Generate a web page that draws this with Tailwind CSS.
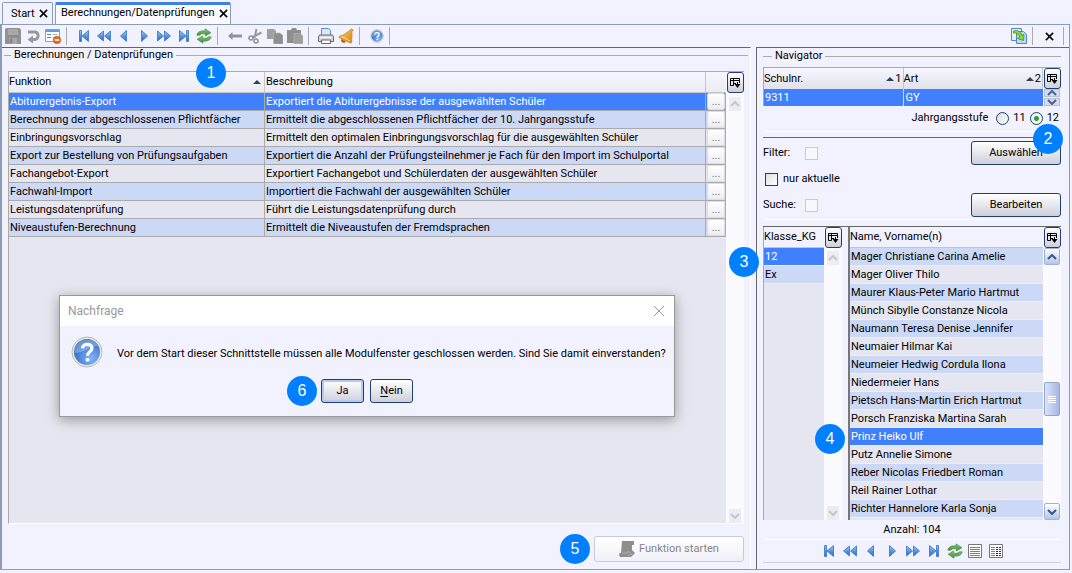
<!DOCTYPE html>
<html lang="de">
<head>
<meta charset="utf-8">
<meta name="viewport" content="width=device-width, initial-scale=1">
<title>Berechnungen/Datenprüfungen</title>
<script src="https://cdn.jsdelivr.net/npm/@tailwindcss/browser@4"></script>
</head>
<body class="flex min-h-screen flex-col bg-[#f2f2ff] font-['Roboto','Noto_Sans',sans-serif] text-[11px] leading-4 text-black">

<svg class="absolute size-0" aria-hidden="true">
  <defs>
    <linearGradient id="blue" x1="0" y1="0" x2="0" y2="1"><stop offset="0" stop-color="#9cc8f5"/><stop offset="1" stop-color="#2463c4"/></linearGradient>
    <linearGradient id="green" x1="0" y1="0" x2="0" y2="1"><stop offset="0" stop-color="#83c878"/><stop offset="1" stop-color="#3d8c3a"/></linearGradient>
    <linearGradient id="gold" x1="0" y1="0" x2="1" y2="1"><stop offset="0" stop-color="#ffd667"/><stop offset="1" stop-color="#d07c10"/></linearGradient>
    <radialGradient id="ball" cx=".65" cy=".75" r=".8"><stop offset="0" stop-color="#80b5fb"/><stop offset="1" stop-color="#2563bd"/></radialGradient>
    <symbol id="first" viewBox="0 0 16 16"><path d="M3.500 2.500h2v11h-2zM12.500 2.500v11L6 8z" fill="url(#blue)" stroke="#4a83d0"/></symbol>
    <symbol id="last" viewBox="0 0 16 16"><path d="M10.500 2.500h2v11h-2zM3.500 2.500v11L10 8z" fill="url(#blue)" stroke="#4a83d0"/></symbol>
    <symbol id="rew" viewBox="0 0 16 16"><path d="M7.500 3v10L1.500 8zM14.500 3v10L8.500 8z" fill="url(#blue)" stroke="#4a83d0"/></symbol>
    <symbol id="fwd" viewBox="0 0 16 16"><path d="M1.500 3v10l6-5zM8.500 3v10l6-5z" fill="url(#blue)" stroke="#4a83d0"/></symbol>
    <symbol id="prev" viewBox="0 0 16 16"><path d="M10.500 2.500v11L4.500 8z" fill="url(#blue)" stroke="#4a83d0"/></symbol>
    <symbol id="next" viewBox="0 0 16 16"><path d="M5.500 2.500v11l6-5.500z" fill="url(#blue)" stroke="#4a83d0"/></symbol>
    <symbol id="refresh" viewBox="0 0 16 16"><g fill="url(#green)" stroke="#44883f" stroke-width=".6"><path d="M.8 7.200C1.200 4 4.500 2.300 9 3V.8l6 3.900-5.600 3.400V6C6.500 5.300 4.500 6 3.800 7.200z"/><path d="M15.200 8.800c-.4 3.200-3.700 4.900-8.200 4.200v2.200l-6-3.900 5.600-3.400V10c2.900.7 4.900 0 5.600-1.200z"/></g></symbol>
    <symbol id="save" viewBox="0 0 16 16"><path d="M0 1.500Q0 0 1.500 0h13L16 1.500V16H0z" fill="#929292"/><path d="M3 1h10v6H3zM4 10h8v6H4z" fill="#a9a9a9"/><path d="M5 11h2v4H5zM3 8h10" fill="#858585" stroke="#858585"/></symbol>
    <symbol id="undo" viewBox="0 0 16 16"><path d="M2 4h7a3.800 3.800 0 0 1 0 7.500H6" fill="none" stroke="#989898" stroke-width="2.800"/><path d="M7 7.500v8L1.500 11.500z" fill="#989898"/></symbol>
    <symbol id="form" viewBox="0 0 16 16"><path d="M.5 1.500h14v12H.5z" fill="#fff" stroke="#78a6dc"/><path d="M1 2h13v2H1z" fill="#639be0"/><path d="M2 6.500h4M2 9.500h4" stroke="#5a87c0"/><path d="M7.500 6.500h5M7.500 9.500h3" stroke="#9bb"/><circle cx="12" cy="12" r="3.800" fill="#e66a1d" stroke="#c4490e" stroke-width=".5"/><path d="M9.800 12h4.400" stroke="#fff" stroke-width="1.600"/></symbol>
    <symbol id="back" viewBox="0 0 16 16"><path d="M1 8l4.500-4v2.500H15v3H5.500V12z" fill="#929292"/></symbol>
    <symbol id="cut" viewBox="0 0 16 16"><path d="M9.500 1L7.500 10M14.500 4.500L5 9.500" stroke="#989898" stroke-width="2" fill="none"/><circle cx="4" cy="10" r="2" fill="none" stroke="#929292" stroke-width="1.500"/><circle cx="9" cy="13" r="2" fill="none" stroke="#929292" stroke-width="1.500"/></symbol>
    <symbol id="copy" viewBox="0 0 16 16"><path d="M0 1h7l2 2v8H0z" fill="#a0a0a0"/><path d="M6.500 5H13l3 2.500V16H6.500z" fill="#8e8e8e" stroke="#bbb" stroke-width=".6"/></symbol>
    <symbol id="paste" viewBox="0 0 16 16"><path d="M0 2h4l1-2h4l1 2h4v13H0z" fill="#8f8f8f"/><path d="M7 5.500h6L16 8v8H7z" fill="#9e9e9e" stroke="#bbb" stroke-width=".6"/></symbol>
    <symbol id="print" viewBox="0 0 16 16"><path d="M3.500 8V.5h7l2 2V8z" fill="#d5e9ff" stroke="#568ed0"/><path d="M1.500 7h13l1 2v4.500H.5V9z" fill="#d6d6d6" stroke="#65686d"/><path d="M3.500 12h9v3.500h-9z" fill="#fff" stroke="#62666b"/><path d="M2 9.500h12" stroke="#fff"/></symbol>
    <symbol id="bell" viewBox="0 0 16 16"><path d="M13.800.8l1.500 1.500-1.500 1.500c.7 3-.2 6.200 0 10.400l-1 1L1 9.500l.5-1.500c4.500-.5 6-2.700 9.700-5.200z" fill="url(#gold)" stroke="#c9820c" stroke-width=".7"/><path d="M3.500 11a2.500 2.500 0 0 0 4.500 2.600z" fill="#b96811"/><path d="M4 8.500l8 4.500" stroke="#ffe59b"/></symbol>
    <symbol id="help" viewBox="0 0 32 32"><circle cx="16" cy="16" r="15" fill="#ebe9e6" stroke="#bcb9b4"/><circle cx="16" cy="16" r="13" fill="url(#ball)"/><path d="M3.500 17A12.500 12.500 0 0 1 27 10C19 9 16 16 3.500 17z" fill="#fff" opacity=".28"/><path d="M11.500 12.200c.2-5.200 9.500-5.200 9.500 0 0 3.400-4.500 3.600-4.500 7.600" fill="none" stroke="#fff" stroke-width="3.200"/><circle cx="16.500" cy="23.800" r="2" fill="#fff"/></symbol>
    <symbol id="export" viewBox="0 0 16 16"><path d="M.5.500h10v12H.5z" fill="#e4f0fd" stroke="#4f86c6"/><path d="M5.500 3.500h7l3 3v9h-10z" fill="#bcdaf8" stroke="#4f86c6"/><path d="M2.500 3c4-1.500 7.500.5 8.200 4.200L13 6.500l-.5 6-6-2 2.200-1.300C8 6.300 5.500 4.500 2.500 5z" fill="#8fd636" stroke="#34821f" stroke-width=".7"/></symbol>
    <symbol id="close" viewBox="0 0 10 10"><path d="M1 1l8 8M9 1L1 9" stroke="currentColor" stroke-width="1.700" fill="none"/></symbol>
    <symbol id="thinclose" viewBox="0 0 12 12"><path d="M1 1l10 10M11 1L1 11" stroke="currentColor" fill="none"/></symbol>
    <symbol id="cols" viewBox="0 0 12 12"><path d="M4.500 8.500h-3v-7h9V6M1.500 3.500h9M4.500 1.500v7M4.500 6.500H7" stroke="#000" fill="none"/><path d="M5.500 7h6l-3 4z"/><path d="M8.500 5v3" stroke="#000"/></symbol>
    <symbol id="sort" viewBox="0 0 8 4"><path d="M4 0l4 4H0z" fill="#2c4358"/></symbol>
    <symbol id="up" viewBox="0 0 10 6"><path d="M1 5l4-4 4 4" stroke="currentColor" stroke-width="2" fill="none"/></symbol>
    <symbol id="down" viewBox="0 0 10 6"><path d="M1 1l4 4 4-4" stroke="currentColor" stroke-width="2" fill="none"/></symbol>
    <symbol id="list" viewBox="0 0 14 14"><path d="M.5.500h13v13H.5z" fill="#fff" stroke="#777"/><path d="M2 3.500h10M2 5.500h10M2 7.500h10M2 9.500h10M2 11.500h10" stroke="#478dd0"/></symbol>
    <symbol id="list2" viewBox="0 0 14 14"><path d="M.5.500h13v13H.5z" fill="#fff" stroke="#777"/><path d="M2 3.500h4M2 5.500h4M2 7.500h4M2 9.500h4M2 11.500h4" stroke="#478dd0"/><path d="M7 3.500h5M7 5.500h5M7 7.500h5M7 9.500h5M7 11.500h5" stroke="#333" stroke-dasharray="2 1"/></symbol>
    <symbol id="scroll" viewBox="0 0 16 16"><path d="M3 0h12v4h-2v5l3 3-3 3-1 1H1c-1-1-1-4 0-4h1z" fill="#8e8e8e"/><path d="M3 12h6v-2l4 3-4 2" fill="none" stroke="#aaa"/></symbol>
  </defs>
</svg>

<nav class="flex gap-[2px] pt-[2px] pl-[2px]" aria-label="Module">
  <div class="flex h-[22px] w-[51px] items-center gap-1 rounded-t-[2px] border border-b-0 border-[#8a9cb8] pl-2">
    <button>Start</button><button aria-label="Start schließen"><svg class="size-[9px]"><use href="#close"/></svg></button>
  </div>
  <div class="flex h-[22px] w-[176px] items-start gap-1 rounded-t-[2px] border border-t-[3px] border-b-0 border-[#8a9cb8] border-t-[#3f7fe8] bg-[#fafaff] pl-[5px]">
    <button>Berechnungen/Datenprüfungen</button><button class="pt-1" aria-label="Berechnungen schließen"><svg class="size-[9px]"><use href="#close"/></svg></button>
  </div>
</nav>

<div class="mr-[2px] mb-[3px] flex flex-1 flex-col border border-l-2 border-[#8a9cb8]">
  <div class="flex h-[22px] items-center pr-[5px]">
    <button class="ml-[3px]" aria-label="Speichern"><svg class="size-4"><use href="#save"/></svg></button>
    <button class="ml-[5px]" aria-label="Rückgängig"><svg class="size-4"><use href="#undo"/></svg></button>
    <button class="ml-[3px]" aria-label="Formular"><svg class="size-4"><use href="#form"/></svg></button>
    <span class="mx-[5px] h-[18px] w-px bg-[#aaa]"></span>
    <div class="flex gap-1 pl-1">
      <button aria-label="Erster"><svg class="size-4"><use href="#first"/></svg></button>
      <button aria-label="Schnell zurück"><svg class="size-4"><use href="#rew"/></svg></button>
      <button aria-label="Zurück"><svg class="size-4"><use href="#prev"/></svg></button>
      <button aria-label="Vor"><svg class="size-4"><use href="#next"/></svg></button>
      <button aria-label="Schnell vor"><svg class="size-4"><use href="#fwd"/></svg></button>
      <button aria-label="Letzter"><svg class="size-4"><use href="#last"/></svg></button>
      <button aria-label="Aktualisieren"><svg class="size-4"><use href="#refresh"/></svg></button>
    </div>
    <span class="mx-[5px] h-[18px] w-px bg-[#aaa]"></span>
    <div class="flex gap-1 pl-1">
      <button aria-label="Pfeil zurück"><svg class="size-4"><use href="#back"/></svg></button>
      <button aria-label="Ausschneiden"><svg class="size-4"><use href="#cut"/></svg></button>
      <button aria-label="Kopieren"><svg class="size-4"><use href="#copy"/></svg></button>
      <button aria-label="Einfügen"><svg class="size-4"><use href="#paste"/></svg></button>
    </div>
    <span class="mx-[5px] h-[18px] w-px bg-[#aaa]"></span>
    <div class="flex gap-1 pl-1">
      <button aria-label="Drucken"><svg class="size-4"><use href="#print"/></svg></button>
      <button aria-label="Erinnerung"><svg class="size-4"><use href="#bell"/></svg></button>
    </div>
    <span class="mx-[5px] h-[18px] w-px bg-[#aaa]"></span>
    <button class="ml-[5px]" aria-label="Hilfe"><svg class="size-[14px]"><use href="#help"/></svg></button>
    <span class="mx-[5px] h-[18px] w-px bg-[#aaa]"></span>
    <button class="ml-auto" aria-label="Exportieren"><svg class="size-4"><use href="#export"/></svg></button>
    <span class="mr-3 ml-[5px] h-[18px] w-px bg-[#aaa]"></span>
    <button aria-label="Schließen"><svg class="size-[9px]"><use href="#close"/></svg></button>
    <span class="ml-[9px] h-[18px] w-px bg-[#aaa]"></span>
  </div>

  <div class="flex flex-1 gap-[5px]">
    <!-- Funktionen -->
    <main class="relative flex flex-1 flex-col border-t border-r border-t-[#666] border-r-white pr-[6px] pl-[6px]">
      <div class="-mx-1 flex h-[14px] items-center gap-[3px]">
        <span class="h-px w-[7px] bg-[#aaa]"></span><h1>Berechnungen / Datenprüfungen</h1><span class="h-px flex-1 bg-[#aaa]"></span>
      </div>
      <div class="mt-[9px] flex flex-1 border-t border-b border-l border-[#aaa] border-b-white">
        <div class="flex-1 bg-[#e6e6f0]">
          <table class="w-full table-fixed border-separate border-spacing-0 text-left">
            <colgroup><col class="w-[256px]"><col><col class="w-5"></colgroup>
            <thead class="bg-linear-to-b from-[#f6f6ff] to-[#ebebf4]">
              <tr class="h-[21px]">
                <th class="border-r border-b border-[#c4c4cc] p-0 font-normal"><div class="flex items-center justify-between pr-[3px]">Funktion<svg class="h-1 w-2"><use href="#sort"/></svg></div></th>
                <th class="border-r border-b border-[#c4c4cc] p-0 pl-px font-normal">Beschreibung</th>
                <th class="border-b border-[#c4c4cc] p-0"></th>
              </tr>
            </thead>
            <tbody class="[&_td]:h-[18px] [&_td]:border-r [&_td]:border-b [&_td]:border-[#aaa] [&_td]:p-0 [&_td]:pl-px [&_td]:leading-4 [&_td]:whitespace-nowrap [&_tr:nth-child(even)]:bg-[#ccd9f6] [&_button]:block [&_button]:h-[17px] [&_button]:w-full [&_button]:rounded-[2px] [&_button]:border [&_button]:border-[#dcdce6] [&_button]:bg-linear-to-b [&_button]:from-white [&_button]:to-[#ececf5] [&_button]:leading-4 [&_button]:text-[#777]">
              <tr class="bg-[#4080ff] text-white"><td>Abiturergebnis-Export</td><td>Exportiert die Abiturergebnisse der ausgewählten Schüler</td><td><button>...</button></td></tr>
              <tr><td>Berechnung der abgeschlossenen Pflichtfächer</td><td>Ermittelt die abgeschlossenen Pflichtfächer der 10. Jahrgangsstufe</td><td><button>...</button></td></tr>
              <tr><td>Einbringungsvorschlag</td><td>Ermittelt den optimalen Einbringungsvorschlag für die ausgewählten Schüler</td><td><button>...</button></td></tr>
              <tr><td>Export zur Bestellung von Prüfungsaufgaben</td><td>Exportiert die Anzahl der Prüfungsteilnehmer je Fach für den Import im Schulportal</td><td><button>...</button></td></tr>
              <tr><td>Fachangebot-Export</td><td>Exportiert Fachangebot und Schülerdaten der ausgewählten Schüler</td><td><button>...</button></td></tr>
              <tr><td>Fachwahl-Import</td><td>Importiert die Fachwahl der ausgewählten Schüler</td><td><button>...</button></td></tr>
              <tr><td>Leistungsdatenprüfung</td><td>Führt die Leistungsdatenprüfung durch</td><td><button>...</button></td></tr>
              <tr><td>Niveaustufen-Berechnung</td><td>Ermittelt die Niveaustufen der Fremdsprachen</td><td><button>...</button></td></tr>
            </tbody>
          </table>
        </div>
        <div class="flex w-[18px] flex-col items-center bg-[#fafaff]">
          <button class="flex h-[21px] w-[17px] items-center justify-center rounded-[3px] border border-[#1f3f73] bg-linear-to-b from-white to-[#cfcfdb]" aria-label="Spalten wählen"><svg class="size-3"><use href="#cols"/></svg></button>
          <button class="mt-1 flex h-[14px] w-3 items-center justify-center bg-[#ececf2] text-[#c6c6ca]" aria-label="Nach oben"><svg class="h-[6px] w-[10px]"><use href="#up"/></svg></button>
          <button class="mt-auto flex h-[14px] w-3 items-center justify-center bg-[#ececf2] text-[#c6c6ca]" aria-label="Nach unten"><svg class="h-[6px] w-[10px]"><use href="#down"/></svg></button>
        </div>
      </div>
      <div class="mt-[10px] mb-[5px] flex items-center justify-end gap-1">
        <span class="flex size-[30px] items-center justify-center rounded-full bg-[#0080ff] font-['Liberation_Sans',sans-serif] text-base text-white">5</span>
        <button class="flex h-[26px] w-[150px] items-center justify-center gap-1 rounded-[3px] border border-[#cacad4] bg-linear-to-b from-white to-[#f0f0f8] text-[#858585]" disabled><svg class="size-4"><use href="#scroll"/></svg>Funktion starten</button>
      </div>
      <span class="absolute top-[10px] left-[194px] flex size-[30px] items-center justify-center rounded-full bg-[#0080ff] font-['Liberation_Sans',sans-serif] text-base text-white">1</span>
      <span class="absolute top-[199px] right-[-9px] z-10 flex size-[30px] items-center justify-center rounded-full bg-[#0080ff] font-['Liberation_Sans',sans-serif] text-base text-white">3</span>

      <section role="dialog" aria-labelledby="dlg" class="absolute top-[247px] left-[57px] w-[616px] border border-[#999] bg-[#f2f2ff] shadow-[0_3px_12px_rgba(0,0,0,.35)]">
        <header class="flex h-[30px] items-center justify-between bg-white pr-[9px] pl-2 text-[#999]">
          <h2 id="dlg" class="text-xs">Nachfrage</h2><button aria-label="Dialog schließen"><svg class="size-3"><use href="#thinclose"/></svg></button>
        </header>
        <div class="flex items-center gap-[14px] px-[11px] pt-[10px]"><svg class="size-8 shrink-0"><use href="#help"/></svg><p class="pt-1 whitespace-nowrap">Vor dem Start dieser Schnittstelle müssen alle Modulfenster geschlossen werden. Sind Sie damit einverstanden?</p></div>
        <div class="flex items-center pt-2 pb-[10px] pl-[227px]">
          <span class="mr-1 flex size-[30px] items-center justify-center rounded-full bg-[#0080ff] font-['Liberation_Sans',sans-serif] text-base text-white">6</span>
          <button class="mr-[6px] h-6 w-[43px] rounded-[3px] border border-[#1f3f73] bg-linear-to-b from-white to-[#cfcfdf] shadow-[inset_0_0_0_2px_#b8c8f0]">Ja</button>
          <button class="h-6 w-[43px] rounded-[3px] border border-[#1f3f73] bg-linear-to-b from-white to-[#cfcfdb]"><u class="underline-offset-2">N</u>ein</button>
        </div>
      </section>
    </main>

    <!-- Navigator -->
    <aside class="relative flex w-[313px] flex-col border-t border-l border-[#666] pr-2 pl-[6px]">
      <div class="flex h-4 items-center gap-[3px]">
        <span class="h-px w-[9px] bg-[#aaa]"></span><h2>Navigator</h2><span class="h-px flex-1 bg-[#aaa]"></span>
      </div>
      <div class="mt-[3px] flex border-t border-l border-[#aaa]">
        <table class="flex-1 table-fixed border-separate border-spacing-0 text-left">
          <thead class="bg-linear-to-b from-[#f6f6ff] to-[#e2e2ec]">
            <tr class="h-[21px]">
              <th class="w-1/2 border-r border-[#c4c4cc] p-0 font-normal"><div class="flex items-center">Schulnr.<svg class="mr-px ml-auto h-1 w-2"><use href="#sort"/></svg><span class="mr-px">1</span></div></th>
              <th class="w-1/2 border-r border-[#c4c4cc] p-0 font-normal"><div class="flex items-center">Art<svg class="mr-px ml-auto h-1 w-2"><use href="#sort"/></svg><span class="mr-px">2</span></div></th>
            </tr>
          </thead>
          <tbody><tr class="h-[17px] bg-[#4080ff] text-white"><td class="border-r border-[#c4d4f4] p-0 pl-px">9311</td><td class="p-0 pl-[2px]">GY</td></tr></tbody>
        </table>
        <div class="flex w-[18px] flex-col items-center">
          <button class="flex h-[21px] w-[17px] items-center justify-center rounded-[3px] border border-[#1f3f73] bg-linear-to-b from-white to-[#cfcfdb]" aria-label="Spalten wählen"><svg class="size-3"><use href="#cols"/></svg></button>
          <button class="flex h-2 w-4 items-center justify-center border border-[#b5c0d8] bg-[#d3dcf0] text-[#4c6287]" aria-label="Nach oben"><svg class="h-[6px] w-[10px]"><use href="#up"/></svg></button>
          <button class="mt-px flex h-2 w-4 items-center justify-center border border-[#b5c0d8] bg-[#d3dcf0] text-[#4c6287]" aria-label="Nach unten"><svg class="h-[6px] w-[10px]"><use href="#down"/></svg></button>
        </div>
      </div>
      <fieldset class="flex h-[26px] items-center justify-end gap-1 border-b border-white pr-[2px] pb-1 pt-1">
        <span class="mr-1">Jahrgangsstufe</span>
        <input type="radio" name="stufe" id="s11" class="size-[13px] appearance-none rounded-full border border-[#1f3f73] bg-linear-to-br from-[#dcdce0] to-white"><label for="s11">11</label>
        <input type="radio" name="stufe" id="s12" checked class="size-[13px] appearance-none rounded-full border border-[#1f3f73] bg-[radial-gradient(circle,#2f9e2f_0_2px,#f4f4f4_3px)]"><label for="s12">12</label>
      </fieldset>
      <div class="mt-[5px] grid grid-cols-[42px_1fr_90px] items-center gap-y-[2px] border-t border-b border-t-[#666] border-b-white pt-[3px] pb-[2px]">
        <label for="filter">Filter:</label>
        <input type="checkbox" id="filter" disabled class="size-[13px] appearance-none border border-[#cbcbd2] bg-[#f8f8fa]">
        <button class="h-6 rounded-[3px] border border-[#1f3f73] bg-linear-to-b from-white to-[#cfcfdb]">Auswählen</button>
        <label class="col-span-3 flex h-6 items-center gap-[5px] pl-[2px]"><input type="checkbox" class="size-[13px] appearance-none border border-[#1f3f73] bg-linear-to-br from-[#e0e0e4] to-white">nur aktuelle</label>
        <label for="suche">Suche:</label>
        <input type="checkbox" id="suche" disabled class="size-[13px] appearance-none border border-[#cbcbd2] bg-[#f8f8fa]">
        <button class="h-6 rounded-[3px] border border-[#1f3f73] bg-linear-to-b from-white to-[#cfcfdb]">Bearbeiten</button>
      </div>
      <div class="mt-[6px] flex flex-1 border-t border-[#666] [&_td]:h-[18px] [&_td]:border-b [&_td]:border-[#ededf6] [&_td]:p-0 [&_td]:pl-px [&_td]:leading-4 [&_td]:whitespace-nowrap [&_th]:h-[21px] [&_th]:border-b [&_th]:border-[#c4c4cc] [&_th]:p-0 [&_th]:font-normal [&_th]:whitespace-nowrap">
        <div class="w-[61px] border-l border-[#aaa] bg-[#e6e6f0]">
          <table class="w-full border-separate border-spacing-0 text-left">
            <thead class="bg-[#f2f2ff]"><tr><th>Klasse_KG</th></tr></thead>
            <tbody><tr class="bg-[#4080ff] text-white"><td>12</td></tr><tr class="bg-[#ccd9f6]"><td>Ex</td></tr></tbody>
          </table>
        </div>
        <div class="relative mr-[6px] flex w-[18px] flex-col items-center bg-[#fafaff]">
          <button class="flex h-[21px] w-[17px] items-center justify-center rounded-[3px] border border-[#1f3f73] bg-linear-to-b from-white to-[#cfcfdb]" aria-label="Spalten wählen"><svg class="size-3"><use href="#cols"/></svg></button>
          <button class="mt-[3px] flex h-[14px] w-3 items-center justify-center bg-[#ececf2] text-[#c6c6ca]" aria-label="Nach oben"><svg class="h-[6px] w-[10px]"><use href="#up"/></svg></button>
          <button class="mt-auto flex h-[14px] w-3 items-center justify-center bg-[#ececf2] text-[#c6c6ca]" aria-label="Nach unten"><svg class="h-[6px] w-[10px]"><use href="#down"/></svg></button>
          <span class="absolute right-[-3px] bottom-[66px] z-10 flex size-[30px] items-center justify-center rounded-full bg-[#0080ff] font-['Liberation_Sans',sans-serif] text-base text-white">4</span>
        </div>
        <div class="flex-1 border-l-2 border-[#777] bg-[#e6e6f0]">
          <table class="w-full border-separate border-spacing-0 text-left">
            <thead class="bg-[#f2f2ff]"><tr><th>Name, Vorname(n)</th></tr></thead>
            <tbody class="[&_tr:nth-child(odd)]:bg-[#ccd9f6]">
              <tr><td>Mager Christiane Carina Amelie</td></tr>
              <tr><td>Mager Oliver Thilo</td></tr>
              <tr><td>Maurer Klaus-Peter Mario Hartmut</td></tr>
              <tr><td>Münch Sibylle Constanze Nicola</td></tr>
              <tr><td>Naumann Teresa Denise Jennifer</td></tr>
              <tr><td>Neumaier Hilmar Kai</td></tr>
              <tr><td>Neumeier Hedwig Cordula Ilona</td></tr>
              <tr><td>Niedermeier Hans</td></tr>
              <tr><td>Pietsch Hans-Martin Erich Hartmut</td></tr>
              <tr><td>Porsch Franziska Martina Sarah</td></tr>
              <tr class="bg-[#4080ff]! text-white"><td>Prinz Heiko Ulf</td></tr>
              <tr><td>Putz Annelie Simone</td></tr>
              <tr><td>Reber Nicolas Friedbert Roman</td></tr>
              <tr><td>Reil Rainer Lothar</td></tr>
              <tr><td>Richter Hannelore Karla Sonja</td></tr>
            </tbody>
          </table>
        </div>
        <div class="flex w-[18px] flex-col items-center bg-[#fafaff]">
          <button class="flex h-[21px] w-[17px] items-center justify-center rounded-[3px] border border-[#1f3f73] bg-linear-to-b from-white to-[#cfcfdb]" aria-label="Spalten wählen"><svg class="size-3"><use href="#cols"/></svg></button>
          <button class="flex h-[17px] w-4 items-center justify-center rounded-[2px] border border-[#9fb2da] bg-linear-to-b from-white to-[#b4c5ec] text-[#3b5580]" aria-label="Nach oben"><svg class="h-[6px] w-[10px]"><use href="#up"/></svg></button>
          <span class="mt-auto flex h-[34px] w-4 flex-col items-center justify-center gap-px rounded-[2px] border border-[#8fa4cf] bg-linear-to-r from-[#dbe4fa] to-[#a5b8e4]"><i class="h-px w-2 bg-white"></i><i class="h-px w-2 bg-white"></i><i class="h-px w-2 bg-white"></i><i class="h-px w-2 bg-white"></i></span>
          <button class="mt-[87px] flex h-[17px] w-4 items-center justify-center rounded-[2px] border border-[#9fb2da] bg-linear-to-b from-white to-[#b4c5ec] text-[#3b5580]" aria-label="Nach unten"><svg class="h-[6px] w-[10px]"><use href="#down"/></svg></button>
        </div>
      </div>
      <p class="flex h-5 items-center justify-center border-b border-white">Anzahl: 104</p>
      <div class="mb-[6px] flex h-[23px] items-center justify-center gap-[5px] border-b border-[#cfcfdc]">
        <button aria-label="Erster Schüler"><svg class="size-4"><use href="#first"/></svg></button>
        <button aria-label="Schnell zurück"><svg class="size-4"><use href="#rew"/></svg></button>
        <button aria-label="Vorheriger Schüler"><svg class="size-4"><use href="#prev"/></svg></button>
        <button aria-label="Nächster Schüler"><svg class="size-4"><use href="#next"/></svg></button>
        <button aria-label="Schnell vor"><svg class="size-4"><use href="#fwd"/></svg></button>
        <button aria-label="Letzter Schüler"><svg class="size-4"><use href="#last"/></svg></button>
        <button aria-label="Aktualisieren"><svg class="size-4"><use href="#refresh"/></svg></button>
        <button aria-label="Liste"><svg class="size-[14px]"><use href="#list"/></svg></button>
        <button class="ml-[2px]" aria-label="Details"><svg class="size-[14px]"><use href="#list2"/></svg></button>
      </div>
      <span class="absolute top-[76px] right-[6px] flex size-[30px] items-center justify-center rounded-full bg-[#0080ff] font-['Liberation_Sans',sans-serif] text-base text-white">2</span>
    </aside>
  </div>
</div>
</body>
</html>
